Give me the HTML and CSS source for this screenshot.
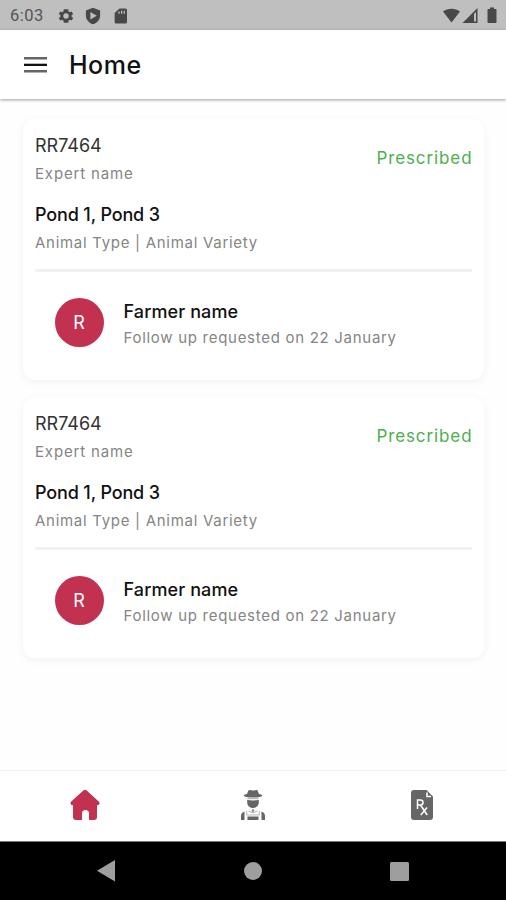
FILE: index.html
```html
<!DOCTYPE html>
<html lang="en">
<head>
<meta charset="utf-8">
<title>Home</title>
<link rel="stylesheet" href="styles.css">
</head>
<body>
<div class="status">
  <span class="time">6:03</span>
  <svg class="s-gear" width="18" height="18" viewBox="0 0 24 24"><path d="M19.4 13a7.500 7.500 0 0 0 0-2l2.100-1.600-2-3.500-2.500 1a8 8 0 0 0-1.700-1L15 3h-6l-.4 2.900a8 8 0 0 0-1.700 1l-2.500-1-2 3.500L4.600 11a7.500 7.500 0 0 0 0 2l-2.200 1.600 2 3.500 2.500-1a8 8 0 0 0 1.700 1L9 21h6l.4-2.900a8 8 0 0 0 1.700-1l2.500 1 2-3.500zM12 15.600a3.600 3.600 0 1 1 0-7.200 3.600 3.600 0 0 1 0 7.200z"/></svg>
  <svg class="s-shield" width="18" height="18" viewBox="0 0 24 24"><path fill-rule="evenodd" d="M12 1 2.500 4.500V11c0 6 4 10.500 9.500 12 5.500-1.500 9.500-6 9.500-12V4.500zM8.500 6.500v10L17 11.500z"/></svg>
  <svg class="s-card" width="18" height="18" viewBox="0 0 24 24"><path fill-rule="evenodd" d="M18 2h-8L3.500 8v12a2 2 0 0 0 2 2H18a2 2 0 0 0 2-2V4a2 2 0 0 0-2-2zM8.500 6h1.700v3H8.500zM12 5h1.700v4H12zM15.500 5h1.700v4h-1.700z"/></svg>
  <svg class="s-net" width="56" height="18" viewBox="0 0 56 18"><path d="M1 4.500C6 .7 13 .7 18 4.500L9.500 15.500z"/><path fill-rule="evenodd" d="M35.500 1v15H20.500zM32 7v7.500h2V5z"/><path d="M46 2h2V.5h4V2h2q.5 0 .5.700v12.600q0 .7-.7.700h-7.600q-.7 0-.7-.7V2.700q0-.7.500-.7z"/></svg>
</div>
<header class="bar">
  <svg width="24" height="18" viewBox="0 0 24 18"><path fill="#666" d="M0 1h23v2.500H0zM0 14h23v2.500H0z"/><path fill="#111" d="M0 7.700h23v2.300H0z"/></svg>
  <h1>Home</h1>
</header>
<main>
  <article class="card">
    <div class="top">
      <div><div class="code">RR7464</div><div class="sub expert">Expert name</div></div>
      <div class="state">Prescribed</div>
    </div>
    <div class="pond">Pond 1, Pond 3</div>
    <div class="sub animal">Animal Type | Animal Variety</div>
    <hr>
    <div class="person">
      <div class="avatar">R</div>
      <div><div class="farmer">Farmer name</div><div class="sub follow">Follow up requested on 22 January</div></div>
    </div>
  </article>
  <article class="card">
    <div class="top">
      <div><div class="code">RR7464</div><div class="sub expert">Expert name</div></div>
      <div class="state">Prescribed</div>
    </div>
    <div class="pond">Pond 1, Pond 3</div>
    <div class="sub animal">Animal Type | Animal Variety</div>
    <hr>
    <div class="person">
      <div class="avatar">R</div>
      <div><div class="farmer">Farmer name</div><div class="sub follow">Follow up requested on 22 January</div></div>
    </div>
  </article>
</main>
<nav class="tabs">
  <svg width="32" height="32" viewBox="0 0 32 32"><path fill="#c2314f" d="M14.300 1.400q1.700-1.400 3.400 0L30 12.700q1 1.300.3 2.600-.5 1-2.300 1V28q0 3-3 3h-5v-6.500a3.500 3.500 0 0 0-7 0V31H7q-3 0-3-3V16.300q-1.800 0-2.300-1-.7-1.300.3-2.600z"/></svg>
  <svg width="26" height="32" viewBox="0 0 26 32"><g fill="#666"><path d="M7 5 8.200 2q.3-1 1.500-.9l3.300.5 3.300-.5q1.200-.1 1.500.9L19 5q3 .4 3.300 1.700Q21 8.500 13 8.500T3.700 6.700Q4 5.400 7 5z"/><path d="M7.200 11q5.800.8 11.600 0v2.500c0 3-2.500 5.500-5.800 5.500s-5.800-2.500-5.800-5.500z"/><path d="M4.500 22.500V31H1v-4q0-3.500 3.500-4.500zM21.500 22.500V31H25v-4q0-3.500-3.500-4.500zM7.500 27.500h11V31h-11z"/></g><path d="M7.500 9.500h11" stroke="#bbb" stroke-width="1.500"/><path d="M6.700 22v4h12.600v-4M8.500 22l4.500 1.800 4.500-1.800" fill="none" stroke="#bbb" stroke-width="1.100"/><circle cx="13" cy="21.500" r="1.300" fill="#888"/></svg>
  <svg width="24" height="32" viewBox="0 0 24 32"><path fill="#666" d="M4 1h12.500L23 7.500V28q0 3-3 3H4q-3 0-3-3V4q0-3 3-3z"/><path d="M17 3.500v4h4" fill="none" stroke="#fff" stroke-width="1.600"/><path d="M7.500 20v-9h3a2.400 2.400 0 0 1 0 5h-3m3 0 6.700 10M17 18.500 10.800 26" fill="none" stroke="#fff" stroke-width="1.500"/></svg>
</nav>
<div class="system">
  <svg width="18" height="22" viewBox="0 0 18 22"><path d="M18 0v21.500L0 10.700z"/></svg>
  <svg width="18" height="18" viewBox="0 0 18 18"><circle cx="9" cy="9" r="9"/></svg>
  <svg width="19" height="19" viewBox="0 0 19 19"><rect width="19" height="19" rx="1.500"/></svg>
</div>
</body>
</html>
```
FILE: styles.css
```css
* { box-sizing: border-box; }
body { margin: 0; width: 506px; height: 900px; overflow: hidden; display: flex; flex-direction: column; background: #fefefe; font-family: Inter, "Liberation Sans", sans-serif; }
svg { display: block; flex: none; }
.status { height: 30px; background: #bfbfbf; display: flex; align-items: center; padding: 1px 8px 0 10px; color: #555; fill: #484848; }
.time { width: 47px; font: 16.500px/30px Roboto, sans-serif; letter-spacing: .5px; padding-top: 1px; }
.s-shield { margin-left: 9px; }
.s-card { margin-left: 10px; }
.s-net { margin-left: auto; }
.bar { height: 69px; background: #fff; display: flex; align-items: center; padding-left: 24px; box-shadow: 0 1px 3px rgba(0,0,0,.38); }
h1 { margin: 1px 0 0 21px; font-size: 25px; line-height: 30px; font-weight: 500; letter-spacing: .5px; color: #111; }
main { flex: 1; padding: 20px 22px 0 23px; }
.card { height: 261px; border-radius: 12px; background: #fff; box-shadow: 0 2px 9px rgba(0,0,0,.055); padding: 15px 12px 0 12px; margin-bottom: 17.400px; }
.top { display: flex; justify-content: space-between; }
.code { font-size: 18px; line-height: 24px; color: #333; }
.sub { font-size: 15px; line-height: 20px; color: #858585; white-space: nowrap; letter-spacing: .71px; }
.expert { margin-top: 6px; letter-spacing: .85px; }
.state { font-size: 17px; line-height: 22px; color: #4caf50; margin: 13px -.5px 0 0; letter-spacing: .9px; }
.pond { margin-top: 19px; font-size: 18px; line-height: 24px; font-weight: 500; letter-spacing: -.15px; color: #111; }
.animal { margin-top: 6px; }
hr { border: 0; height: 3px; background: #f1f1f1; margin: 16px 0 0; }
.person { display: flex; padding: 26px 0 0 19.500px; }
.avatar { width: 49px; height: 49px; border-radius: 50%; background: #c2314f; color: #fff; font-size: 18px; line-height: 50px; text-align: center; margin-right: 20px; }
.farmer { font-size: 18px; line-height: 24px; font-weight: 500; letter-spacing: .1px; color: #111; margin-top: 2px; }
.follow { margin-top: 4px; }
.tabs { height: 71px; background: #fff; border-top: 1px solid #f1f1f1; display: grid; grid-template-columns: repeat(3, 1fr); justify-items: center; align-items: center; padding: 0 0 2px 1px; }
.system { height: 59px; background: #000; border-top: 1px solid #777; fill: #9e9e9e; display: flex; align-items: center; justify-content: space-between; padding: 0 97px 0 97px; }
.system svg:nth-child(2) { margin-left: 1px; }
```
